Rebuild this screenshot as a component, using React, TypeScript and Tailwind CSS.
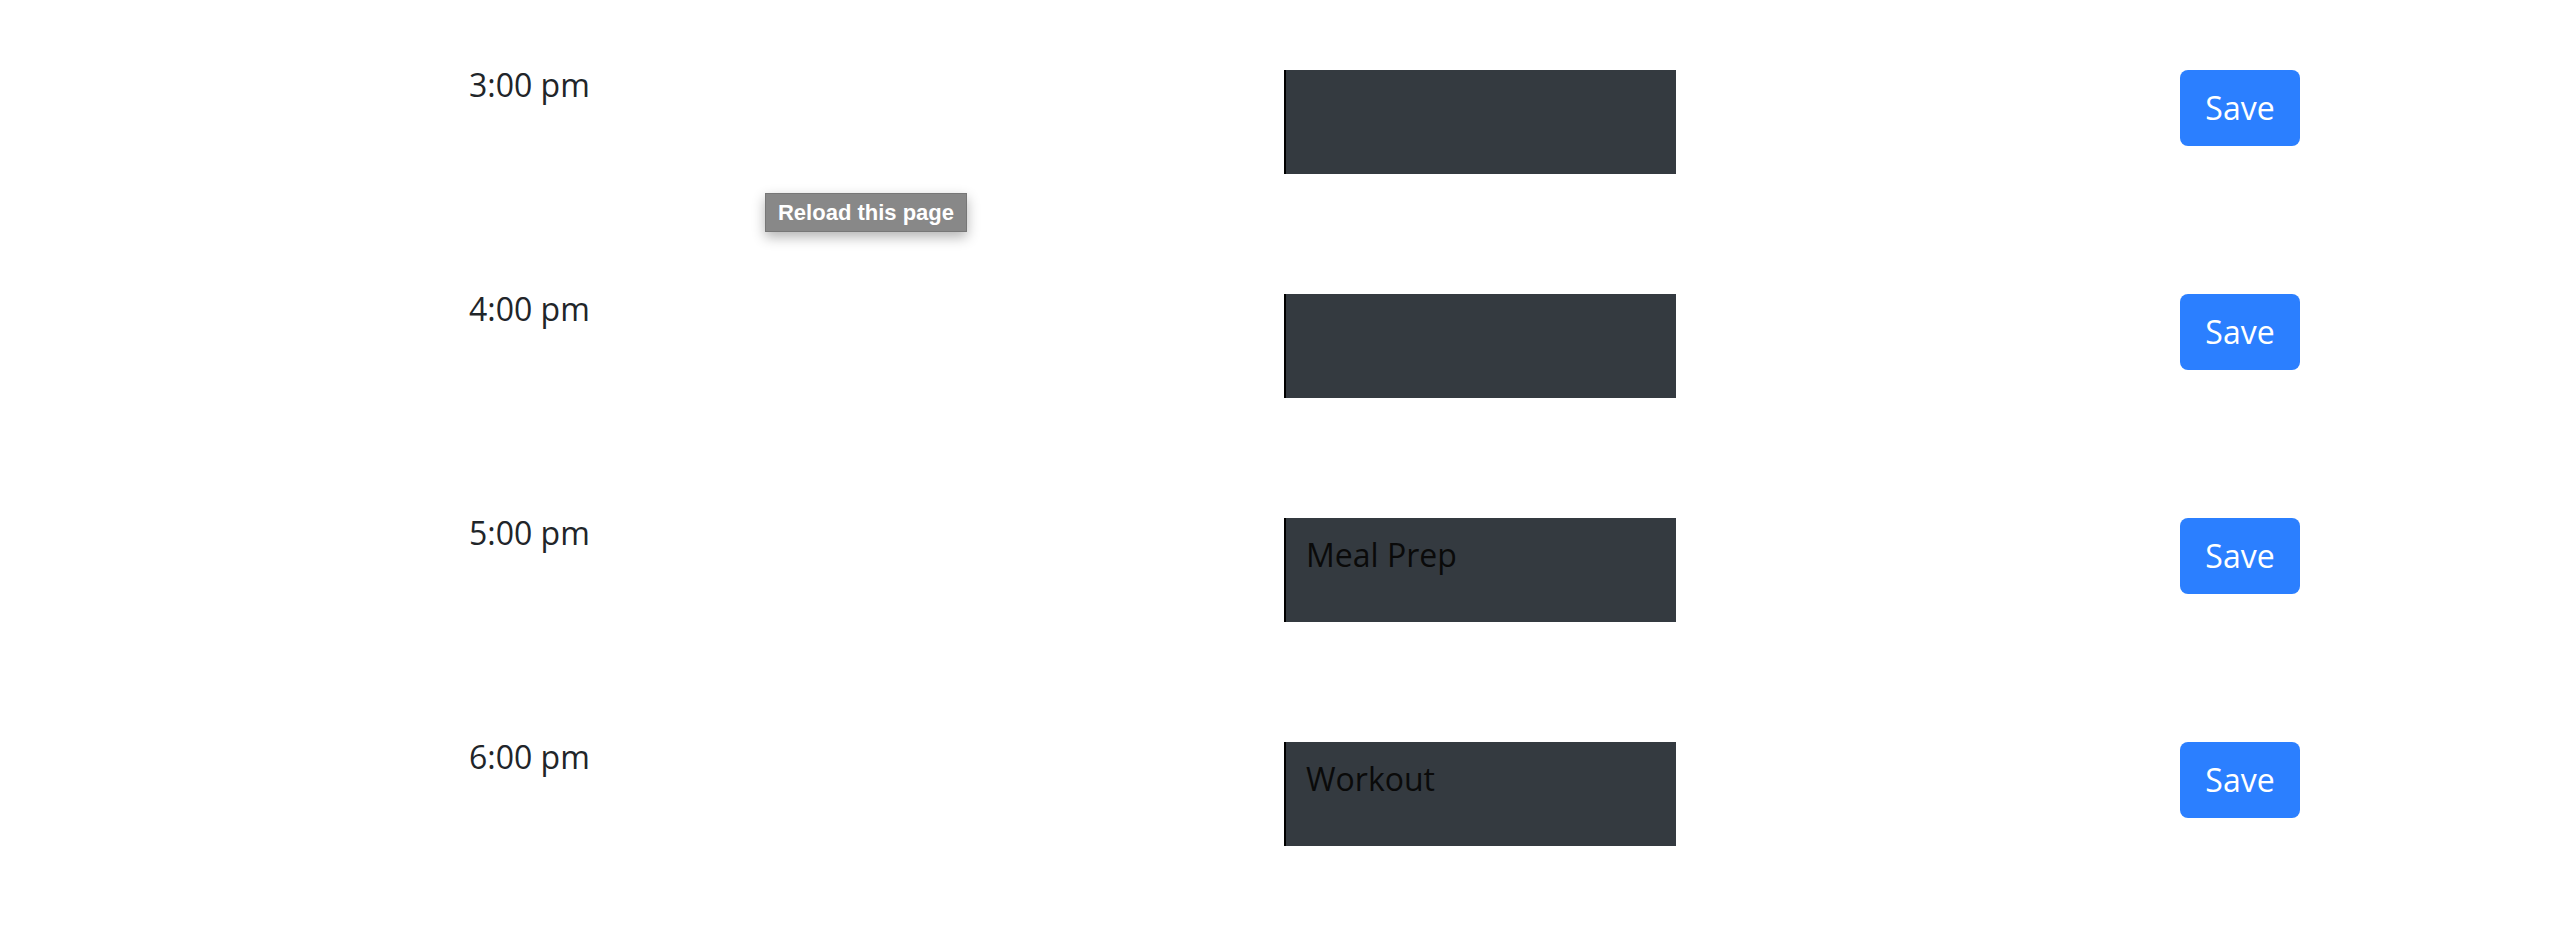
import React from "react";

const HOURS = [
  { label: "3:00 pm", text: "" },
  { label: "4:00 pm", text: "" },
  { label: "5:00 pm", text: "Meal Prep" },
  { label: "6:00 pm", text: "Workout" },
];

function HourRow({ label, text }: { label: string; text: string }) {
  return (
    <div className="flex items-start">
      <div className="-mt-[7px] w-[818px] pl-[3px] text-[32px] leading-[44px] text-[#212529]">{label}</div>
      <textarea
        defaultValue={text}
        spellCheck={false}
        className="h-[104px] w-[392px] resize-none border-l-2 border-black bg-[#343a40] pl-[20px] pt-[15px] text-[32px] leading-[44px] text-[#0a0a0a] outline-none"
      />
      <button className="ml-[504px] h-[76px] w-[120px] rounded-lg bg-blue-500 text-[32px] leading-none text-white">
        Save
      </button>
    </div>
  );
}

export default function App() {
  return (
    <div className="relative h-[928px] w-full overflow-hidden bg-white font-['Open_Sans',sans-serif]">
      <div className="flex flex-col gap-[120px] pl-[466px] pt-[70px]">
        {HOURS.map((h) => (
          <HourRow key={h.label} label={h.label} text={h.text} />
        ))}
      </div>

      {/* browser tooltip */}
      <div className="absolute left-[765px] top-[193px] flex h-[39px] w-[202px] items-center justify-center border border-[#777] bg-[#888] font-['Liberation_Sans',Arial,sans-serif] text-[22px] font-bold text-white shadow-[0_5px_12px_rgba(0,0,0,0.3)]">
        Reload this page
      </div>
    </div>
  );
}
